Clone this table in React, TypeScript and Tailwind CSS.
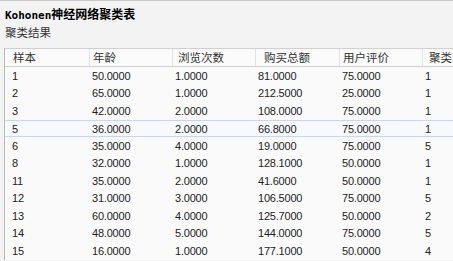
import React from "react";

const headers = ["样本", "年龄", "浏览次数", "购买总额", "用户评价", "聚类"];
const headerPad = ["pl-[8px]", "pl-[3px]", "pl-[5px]", "pl-[8px]", "pl-[3px]", "pl-[6px]"];
const rows: string[][] = [
  ["1", "50.0000", "1.0000", "81.0000", "75.0000", "1"],
  ["2", "65.0000", "1.0000", "212.5000", "25.0000", "1"],
  ["3", "42.0000", "2.0000", "108.0000", "75.0000", "1"],
  ["5", "36.0000", "2.0000", "66.8000", "75.0000", "1"],
  ["6", "35.0000", "4.0000", "19.0000", "75.0000", "5"],
  ["8", "32.0000", "1.0000", "128.1000", "50.0000", "1"],
  ["11", "35.0000", "2.0000", "41.6000", "50.0000", "1"],
  ["12", "31.0000", "3.0000", "106.5000", "75.0000", "5"],
  ["13", "60.0000", "4.0000", "125.7000", "50.0000", "2"],
  ["14", "48.0000", "5.0000", "144.0000", "75.0000", "5"],
  ["15", "16.0000", "1.0000", "177.1000", "50.0000", "4"],
];
const cellPad = ["pl-[7px]", "pl-[3px]", "pl-[3px]", "pl-[3px]", "pl-[3px]", "pl-[3px]"];
const cols = "grid grid-cols-[84px_83px_83px_84px_83px_1fr]";

export default function App() {
  return (
    <div className="w-[453px] h-[261px] overflow-hidden bg-[#f3f3f3] border-t border-[#c8c8c8] text-[#222]">
      <div className="pl-[5px] pt-[5px] h-[21px] text-[12px] font-bold leading-[16px] text-black">
        <span className="text-[11px] font-['DejaVu_Sans_Mono',monospace]">Kohonen</span>
        <span className="font-['Noto_Sans_CJK_SC',sans-serif]">神经网络聚类表</span>
      </div>
      <div className="pl-[5px] pt-[2px] h-[26px] text-[11.5px] leading-[16px] text-[#333] font-['Noto_Sans_CJK_SC',sans-serif]">
        聚类结果
      </div>
      <div className="ml-[4px] border-l border-[#b9b9b9] bg-[#fafafa]">
        <div className={`${cols} h-[19px] border-t border-b border-[#d0d0d0] bg-[#fbfbfb] text-[11.5px] text-[#333] items-center font-['Noto_Sans_CJK_SC',sans-serif]`}>
          {headers.map((h, i) => (
            <div key={h} className={`${headerPad[i]} h-full flex items-center ${i > 0 ? "border-l border-[#e2e2e2]" : ""}`}>
              {h}
            </div>
          ))}
        </div>
        {rows.map((r, ri) => (
          <div
            key={ri}
            className={`${cols} h-[17.5px] items-center text-[11px] tracking-[-0.2px] font-['Liberation_Sans',Arial,sans-serif] ${
              ri === 3 ? "border-t border-b border-[#c9d6ef] bg-[#f7f9fd]" : ""
            }`}
          >
            {r.map((c, ci) => (
              <div key={ci} className={cellPad[ci]}>
                {c}
              </div>
            ))}
          </div>
        ))}
      </div>
    </div>
  );
}
